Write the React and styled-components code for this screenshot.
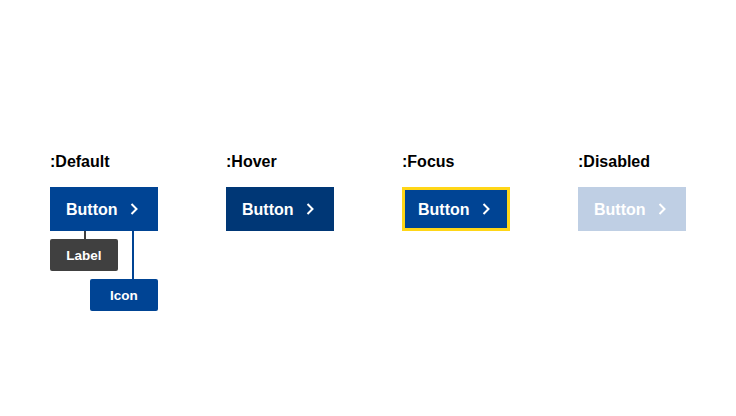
import React from "react";
import styled, { createGlobalStyle } from "styled-components";

const GlobalStyle = createGlobalStyle`
  body {
    margin: 0;
    background: #ffffff;
    font-family: Arial, "Liberation Sans", sans-serif;
  }
`;

const Page = styled.div`
  width: 736px;
  height: 416px;
  box-sizing: border-box;
  padding: 153px 0 0 50px;
  display: grid;
  grid-template-columns: repeat(4, 108px);
  column-gap: 68px;
  align-items: start;
`;

const Column = styled.div`
  display: flex;
  flex-direction: column;
`;

const StateTitle = styled.div`
  font-size: 16px;
  font-weight: 700;
  line-height: 18px;
  color: #000000;
  margin-bottom: 16px;
`;

const variants = {
  default: { bg: "#004494", fg: "#ffffff", border: "transparent" },
  hover: { bg: "#003776", fg: "#ffffff", border: "transparent" },
  focus: { bg: "#004494", fg: "#ffffff", border: "#ffd617" },
  disabled: { bg: "#bfcfe4", fg: "#ffffff", border: "transparent" },
};

const Button = styled.button`
  width: 108px;
  height: 44px;
  box-sizing: border-box;
  display: flex;
  align-items: center;
  gap: 12px;
  margin: 0;
  border: 3px solid ${(p) => variants[p.$state].border};
  padding: 2px 0 0 13px;
  background: ${(p) => variants[p.$state].bg};
  color: ${(p) => variants[p.$state].fg};
  font-family: Arial, "Liberation Sans", sans-serif;
  font-size: 16px;
  font-weight: 700;
  cursor: ${(p) => (p.$state === "disabled" ? "default" : "pointer")};

  svg {
    margin-top: -2px;
  }
`;

const Annotations = styled.div`
  position: relative;
  display: flex;
  flex-direction: column;
  align-items: flex-start;
  gap: 8px;
  padding-top: 8px;
`;

const Connector = styled.span`
  position: absolute;
  top: 0;
  left: ${(p) => p.$left}px;
  width: 2px;
  height: ${(p) => p.$height}px;
  background: ${(p) => p.$color};
`;

const Tag = styled.div`
  width: 68px;
  height: 32px;
  margin-left: ${(p) => p.$offset || 0}px;
  border-radius: 2px;
  background: ${(p) => p.$color};
  color: #ffffff;
  font-size: 13.5px;
  font-weight: 700;
  display: flex;
  align-items: center;
  justify-content: center;
`;

const Chevron = () => (
  <svg width="8" height="12" viewBox="0 0 8 12" fill="none">
    <polyline points="1.5,1 6.5,6 1.5,11" stroke="currentColor" strokeWidth="2" />
  </svg>
);

const states = [
  { key: "default", title: ":Default" },
  { key: "hover", title: ":Hover" },
  { key: "focus", title: ":Focus" },
  { key: "disabled", title: ":Disabled" },
];

export default function App() {
  return (
    <>
      <GlobalStyle />
      <Page>
        {states.map((s) => (
          <Column key={s.key}>
            <StateTitle>{s.title}</StateTitle>
            <Button $state={s.key} disabled={s.key === "disabled"}>
              Button
              <Chevron />
            </Button>
            {s.key === "default" && (
              <Annotations>
                <Connector $left={34} $height={8} $color="#404040" />
                <Connector $left={82} $height={48} $color="#004494" />
                <Tag $color="#404040">Label</Tag>
                <Tag $color="#004494" $offset={40}>Icon</Tag>
              </Annotations>
            )}
          </Column>
        ))}
      </Page>
    </>
  );
}
